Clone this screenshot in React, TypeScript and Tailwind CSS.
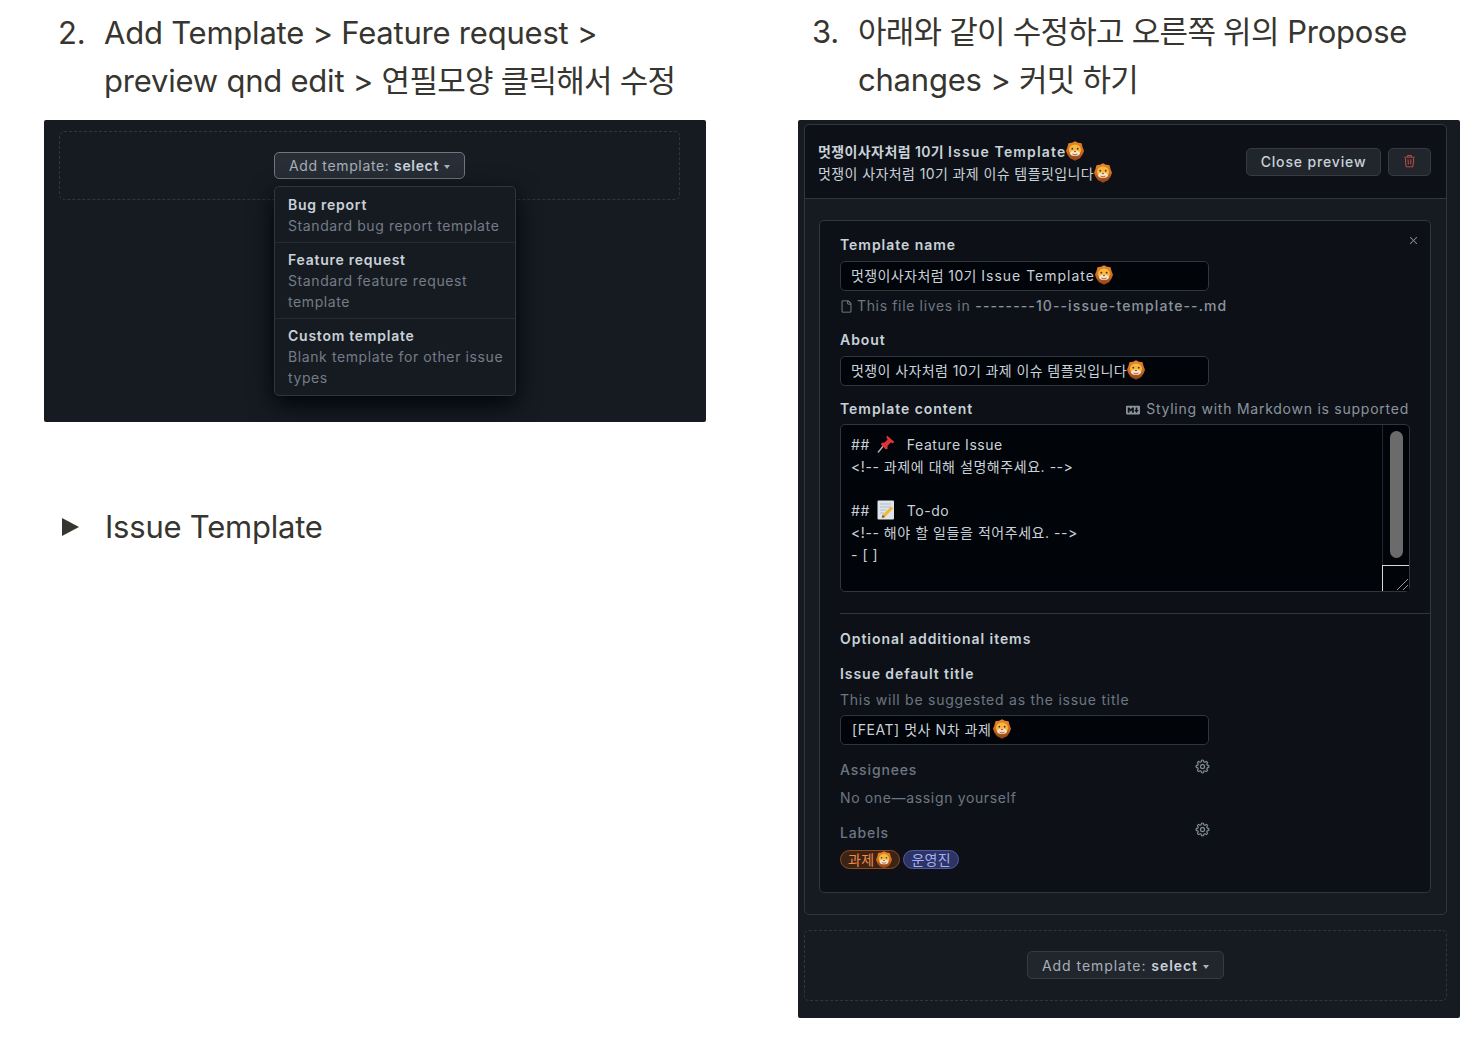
import type { ReactNode } from "react";
import { GoFile, GoGear, GoTrash, GoX } from "react-icons/go";

const font = { fontFamily: '"Inter", "Noto Sans CJK KR", sans-serif' };

function Lion({ size = 18 }: { size?: number }) {
  return (
    <svg width={size} height={size * 1.1} viewBox="1 0.5 18 19.5" className="inline-block align-[-4px] shrink-0">
      <defs>
        <linearGradient id="mane" x1="0" y1="0" x2="0" y2="1">
          <stop offset="0" stopColor="#e8892a" />
          <stop offset="0.55" stopColor="#cf6a1e" />
          <stop offset="1" stopColor="#8a3f16" />
        </linearGradient>
      </defs>
      <path d="M10 .5 L13 2 L16.5 2.6 L17.6 6.5 L19 10 L17.6 13.8 L15 17.6 L10 20 L5 17.6 L2.4 13.8 L1 10 L2.4 6.5 L3.5 2.6 L7 2 Z" fill="url(#mane)" />
      <ellipse cx="10" cy="9.4" rx="6" ry="5.6" fill="#f7b940" />
      <ellipse cx="10" cy="12.6" rx="4.8" ry="2.6" fill="#f6e6d4" />
      <circle cx="7.3" cy="8" r="0.9" fill="#4a2a12" />
      <circle cx="12.7" cy="8" r="0.9" fill="#4a2a12" />
      <path d="M8.6 10.4 H11.4 L10 11.8 Z" fill="#a0401a" />
      <path d="M7.5 13.4 Q10 15 12.5 13.4" stroke="#a0401a" strokeWidth="0.8" fill="none" />
    </svg>
  );
}

function Pin() {
  return (
    <svg width="20" height="20" viewBox="0 0 20 20" className="shrink-0">
      <path d="M2 18.5 L8 11" stroke="#a9b1ba" strokeWidth="1.4" />
      <path d="M11 1.5 L18.5 8 L16.5 9.2 L14.6 8.6 L11.5 12 L11.6 14.8 L9.8 15.6 L4.8 10.2 L6 8.8 L8.6 8.6 L11.6 5.4 L10.4 3.4 Z" fill="#e0323c" />
    </svg>
  );
}

function Memo() {
  return (
    <svg width="18" height="20" viewBox="0 0 18 20" className="shrink-0">
      <rect x="0.5" y="0.5" width="16.5" height="19" rx="1" fill="#dfe4ea" />
      <path d="M3 4 H14 M3 7 H14 M3 10 H9 M3 13 H7" stroke="#a8b0ba" strokeWidth="0.8" />
      <path d="M14 6.5 L16.2 8.5 L8 17 L4.8 18 L5.6 14.8 Z" fill="#f1b93a" />
      <path d="M4.8 18 L5.6 14.8 L8 17 Z" fill="#7a5a2a" />
    </svg>
  );
}

function MarkdownIcon() {
  return (
    <svg width="14" height="14" viewBox="0 0 16 16" fill="currentColor" className="mr-[6px] mt-[3px] shrink-0">
      <path d="M14.85 3c.63 0 1.15.52 1.14 1.15v7.7c0 .63-.51 1.15-1.15 1.15H1.15C.52 13 0 12.48 0 11.85v-7.7C0 3.52.52 3 1.15 3ZM9 11V5H7L5.5 7 4 5H2v6h2V8l1.5 1.92L7 8v3Zm2.99.5L14.5 8H13V5h-2v3H9.5Z" />
    </svg>
  );
}

function Caret() {
  return <span className="inline-block ml-[5px] align-[2px] border-x-[3.5px] border-t-[4px] border-x-transparent border-t-current" />;
}

function AddTemplate({ active }: { active?: boolean }) {
  return (
    <button
      className={`rounded-[5px] border px-[14px] text-[14px] whitespace-nowrap text-[#a8afb7] ${
        active ? "h-[27px] border-[#6e7681] bg-[#282e36] tracking-[0.65px]" : "h-[28px] border-[#363b43] bg-[#21262d] tracking-[0.95px]"
      }`}
    >
      Add template: <b className="font-semibold text-[#c9d1d9]">select</b>
      <Caret />
    </button>
  );
}

function MenuItem({ title, lines, last }: { title: string; lines: string[]; last?: boolean }) {
  return (
    <div className={`px-[13px] pt-[6px] pb-[6px] leading-[21px] tracking-[0.6px] ${last ? "" : "border-b border-[#262b33]"}`}>
      <div className="text-[14px] font-semibold tracking-[0.75px] text-[#c9d1d9]">{title}</div>
      {lines.map((l) => (
        <div key={l} className="text-[14px] text-[#747c86] whitespace-nowrap">{l}</div>
      ))}
    </div>
  );
}

function Heading({ n, a, b }: { n: string; a: ReactNode; b: ReactNode }) {
  return (
    <div className="flex text-[31px] leading-[48px] tracking-[-0.22px] text-[#37352f]">
      <span className="w-[60px] pl-[14px] shrink-0">{n}</span>
      <div className="whitespace-nowrap">
        <div>{a}</div>
        <div>{b}</div>
      </div>
    </div>
  );
}

function Ko({ children }: { children: ReactNode }) {
  return <span className="tracking-[-0.75px]">{children}</span>;
}

function En({ children }: { children: ReactNode }) {
  return <span className="tracking-[1px]">{children}</span>;
}

function TextInput({ children }: { children: ReactNode }) {
  return (
    <div className="h-[30px] w-[369px] rounded-[5px] border border-[#30363d] bg-[#010409] px-[10px] text-[14px] leading-[28px] tracking-[0.4px] whitespace-nowrap text-[#c9d1d9]">
      {children}
    </div>
  );
}

function Label({ children, className = "" }: { children: ReactNode; className?: string }) {
  return <div className={`text-[14px] leading-[20px] font-semibold tracking-[0.95px] text-[#c9d1d9] ${className}`}>{children}</div>;
}

function CodeLine({ children }: { children?: ReactNode }) {
  return <div className="flex h-[22px] items-center text-[14px] tracking-[0.55px] whitespace-pre text-[#c9d1d9]">{children}</div>;
}

function ConfigRow({ label, className = "" }: { label: string; className?: string }) {
  return (
    <div className={`flex w-[370px] items-start justify-between ${className}`}>
      <span className="text-[14px] leading-[20px] font-medium tracking-[0.85px] text-[#6e7681]">{label}</span>
      <GoGear className="-mt-[1.5px] text-[#8b949e] stroke-[0.4]" size={15} />
    </div>
  );
}

export default function App() {
  return (
    <div style={font} className="flex h-[1038px] w-[1478px] gap-[92px] overflow-hidden bg-white pl-[44px]">
      {/* left column */}
      <div className="w-[662px] pt-[9px]">
        <Heading n="2." a="Add Template > Feature request >" b={<>preview qnd edit &gt; <Ko>연필모양 클릭해서 수정</Ko></>} />
        <div className="mt-[15px] h-[302px] overflow-hidden rounded-[2px] bg-[#161b22] px-[15px] pt-[11px]">
          <div className="relative flex h-[69px] w-[621px] justify-center rounded-[5px] border border-dashed border-[#30363d] pt-[20px]">
            <AddTemplate active />
            <div className="absolute top-[54px] left-[214px] w-[242px] rounded-[5px] border border-[#30363d] bg-[#161b22] py-[1px] shadow-[0_8px_24px_#010409]">
              <MenuItem title="Bug report" lines={["Standard bug report template"]} />
              <MenuItem title="Feature request" lines={["Standard feature request", "template"]} />
              <MenuItem title="Custom template" lines={["Blank template for other issue", "types"]} last />
            </div>
          </div>
        </div>
        <div className="mt-[81px] flex items-center text-[31px] leading-[48px] tracking-[-0.22px] text-[#37352f]">
          <span className="ml-[18px] h-0 w-0 border-y-[9px] border-l-[17px] border-y-transparent border-l-[#37352f]" />
          <span className="ml-[26px]">Issue Template</span>
        </div>
      </div>

      {/* right column */}
      <div className="w-[662px] pt-[8px]">
        <Heading n="3." a={<><Ko>아래와 같이 수정하고 오른쪽 위의</Ko> Propose</>} b={<>changes &gt; <Ko>커밋 하기</Ko></>} />
        <div className="mt-[16px] h-[898px] rounded-[2px] bg-[#161b22] pt-[4px] pl-[6px] pr-[13px]">
          <div className="h-[791px] rounded-[5px] border border-[#30363d]">
            {/* header */}
            <div className="flex h-[74px] items-center justify-between rounded-t-[5px] border-b border-[#30363d] bg-[#0d1117] pr-[15px] pl-[13px]">
              <div className="pt-[2px] text-[14px] leading-[22px] tracking-[0.4px] text-[#c9d1d9]">
                <div className="font-semibold whitespace-nowrap">멋쟁이사자처럼 10기 <span className="tracking-[1.15px]">Issue Template</span><Lion /></div>
                <div className="whitespace-nowrap">멋쟁이 사자처럼 10기 과제 이슈 템플릿입니다<Lion /></div>
              </div>
              <div className="flex gap-[7px]">
                <button className="h-[28px] w-[135px] rounded-[5px] border border-[#363b43] bg-[#21262d] text-[14px] font-medium tracking-[0.85px] text-[#c9d1d9]">
                  Close preview
                </button>
                <button className="flex h-[28px] w-[43px] items-center justify-center rounded-[5px] border border-[#363b43] bg-[#21262d] text-[#e5534b]">
                  <GoTrash size={13} />
                </button>
              </div>
            </div>

            {/* card */}
            <div className="pt-[21px] pr-[15px] pl-[14px]">
              <div className="relative h-[673px] rounded-[5px] border border-[#30363d] bg-[#0d1117] pt-[14px] pl-[20px]">
                <GoX className="absolute top-[13px] right-[10px] text-[#8b949e]" size={13} />
                <Label>Template name</Label>
                <div className="mt-[6px]"><TextInput>멋쟁이사자처럼 10기 <En>Issue Template</En><Lion /></TextInput></div>
                <div className="mt-[4px] flex h-[20px] items-center text-[14px] tracking-[0.65px] whitespace-nowrap text-[#6e7681]">
                  <GoFile className="mr-[4px] mt-[2px] text-[#8b949e]" size={13} />
                  This file lives in<span className="ml-[5px] font-medium tracking-[1.1px] text-[#8b949e]">--------10--issue-template--.md</span>
                </div>
                <Label className="mt-[15px]">About</Label>
                <div className="mt-[6px]"><TextInput>멋쟁이 사자처럼 10기 과제 이슈 템플릿입니다<Lion /></TextInput></div>
                <div className="mt-[12px] flex w-[569px] items-center justify-between">
                  <Label>Template content</Label>
                  <span className="flex items-center text-[14px] tracking-[0.75px] whitespace-nowrap text-[#8b949e]">
                    <MarkdownIcon />
                    Styling with Markdown is supported
                  </span>
                </div>
                <div className="relative mt-[5px] h-[168px] w-[570px] rounded-[5px] border border-[#30363d] bg-[#010409] pt-[8px] pl-[10px]">
                  <CodeLine>## <span className="ml-[2px] mr-[6px]"><Pin /></span> Feature Issue</CodeLine>
                  <CodeLine>{"<!-- 과제에 대해 설명해주세요. -->"}</CodeLine>
                  <CodeLine />
                  <CodeLine>## <span className="ml-[3px] mr-[7px]"><Memo /></span> To-do</CodeLine>
                  <CodeLine>{"<!-- 해야 할 일들을 적어주세요. -->"}</CodeLine>
                  <CodeLine>- [ ]</CodeLine>
                  <div className="absolute top-0 right-0 bottom-0 w-[27px] border-l border-[#22272e]">
                    <div className="mx-auto mt-[6px] h-[127px] w-[13px] rounded-full bg-[#6b6b6b]" />
                  </div>
                  <div className="absolute right-0 bottom-0 h-[26px] w-[27px] border-t border-l border-[#d8d8d8] bg-[#010409]">
                    <svg width="26" height="25" viewBox="0 0 26 25" className="block">
                      <path d="M14 24 L25 13 M20 24 L25 19" stroke="#9a9a9a" strokeWidth="1" />
                    </svg>
                  </div>
                </div>
                <div className="mt-[21px] border-t border-[#30363d]" />
                <Label className="mt-[15px]">Optional additional items</Label>
                <Label className="mt-[15px]">Issue default title</Label>
                <div className="mt-[6px] text-[14px] leading-[20px] tracking-[0.75px] text-[#6e7681]">This will be suggested as the issue title</div>
                <div className="mt-[5px]"><TextInput><span className="ml-[1px] mr-[2px] tracking-[0.55px]">[FEAT] 멋사 N차 과제</span><Lion /></TextInput></div>
                <ConfigRow label="Assignees" className="mt-[15px]" />
                <div className="mt-[8px] text-[14px] leading-[20px] tracking-[0.65px] text-[#6e7681]">No one—assign yourself</div>
                <ConfigRow label="Labels" className="mt-[15px]" />
                <div className="mt-[7px] flex gap-[3px]">
                  <span className="flex h-[19px] items-center rounded-full border border-[#8a4a24] bg-[#3d2314] px-[7px] text-[14px] tracking-[0.3px] text-[#f08a4b]">과제<span className="ml-[2px] flex"><Lion size={16} /></span></span>
                  <span className="flex h-[19px] items-center rounded-full border border-[#4e5a9e] bg-[#2d3362] px-[7px] text-[14px] tracking-[0.3px] text-[#a5b1f5]">운영진</span>
                </div>
              </div>
            </div>
          </div>
          {/* bottom add template */}
          <div className="mt-[15px] flex h-[71px] justify-center rounded-[5px] border border-dashed border-[#30363d] pt-[20px]">
            <AddTemplate />
          </div>
        </div>
      </div>
    </div>
  );
}
